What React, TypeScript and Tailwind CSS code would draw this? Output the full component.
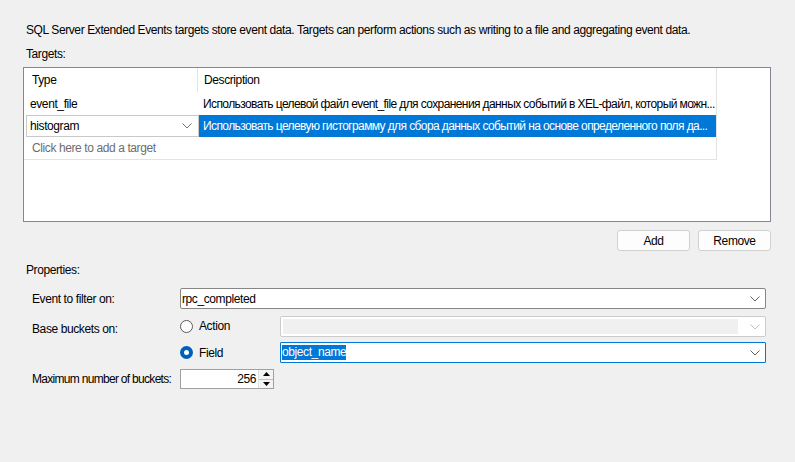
import React from "react";

const Chevron = ({ color = "#5f5f5f" }: { color?: string }) => (
  <svg width="10" height="6" viewBox="0 0 10 6" className="shrink-0">
    <path d="M0.5 0.5 L5 5 L9.5 0.5" fill="none" stroke={color} strokeWidth="1" />
  </svg>
);

export default function App() {
  return (
    <div
      className="w-[795px] h-[462px] bg-[#f0f0f0] text-[12px] tracking-[-0.4px] text-black overflow-hidden flex flex-col whitespace-nowrap"
      style={{ fontFamily: '"Liberation Sans", Arial, sans-serif' }}
    >
      <div className="mt-[22px] ml-[26px] leading-[16px]">
        SQL Server Extended Events targets store event data. Targets can perform actions such as writing to a file and aggregating event data.
      </div>
      <div className="mt-[8px] ml-[26px] leading-[16px]">Targets:</div>

      {/* Grid */}
      <div className="mt-[5px] ml-[23px] w-[748px] h-[155px] border border-[#828790] bg-white">
        <div className="w-[693px] border-r border-b border-[#e3e3e3]">
          <div className="flex h-[24px]">
            <div className="w-[174px] border-r border-[#e5e5e5] pl-[8px] flex items-center">Type</div>
            <div className="flex-1 pl-[6px] flex items-center">Description</div>
          </div>
          <div className="flex h-[23px]">
            <div className="w-[175px] pl-[6px] flex items-center">event_file</div>
            <div className="flex-1 min-w-0 pl-[4px] pr-[1px] flex items-center overflow-hidden tracking-[-0.6px]">
              Использовать целевой файл event_file для сохранения данных событий в XEL-файл, который можн...
            </div>
          </div>
          <div className="flex h-[22px]">
            <div className="w-[175px] pl-[2px] flex">
              <div className="flex-1 border border-[#c9c9c9] flex items-center pl-[3px] pr-[6px] justify-between">
                <span>histogram</span>
                <Chevron color="#707070" />
              </div>
            </div>
            <div className="flex-1 min-w-0 bg-[#0078d7] text-white pl-[4px] pr-[1px] flex items-center overflow-hidden tracking-[-0.6px]">
              Использовать целевую гистограмму для сбора данных событий на основе определенного поля да...
            </div>
          </div>
          <div className="flex h-[22px] items-center pl-[8px] text-[#6d6d6d]">Click here to add a target</div>
        </div>
      </div>

      {/* Buttons */}
      <div className="mt-[8px] flex justify-end gap-[8px] mr-[24px]">
        <button className="w-[73px] h-[21px] rounded-[3px] border border-[#d0d0d0] bg-[#fdfdfd] leading-none">Add</button>
        <button className="w-[73px] h-[21px] rounded-[3px] border border-[#d0d0d0] bg-[#fdfdfd] leading-none">Remove</button>
      </div>

      <div className="mt-[11px] ml-[26px] leading-[16px]">Properties:</div>

      <div className="mt-[10px] pl-[32px] pr-[29px] flex flex-col">
        <div className="flex items-center h-[21px]">
          <div className="w-[148px]">Event to filter on:</div>
          <div className="flex-1 h-full bg-white border border-[#868686] rounded-[2px] flex items-center pl-[1px] pr-[5px] justify-between">
            <span>rpc_completed</span>
            <Chevron />
          </div>
        </div>
        <div className="flex items-center h-[21px] mt-[7px]">
          <div className="w-[148px] pt-[4px]">Base buckets on:</div>
          <div className="w-[100px] flex items-center">
            <div className="w-[13px] h-[13px] rounded-full border border-[#5c5c5c] bg-white" />
            <span className="ml-[6px] -mt-[2px]">Action</span>
          </div>
          <div className="flex-1 h-full bg-white border border-[#cccccc] rounded-[2px] flex items-center p-[2px] pr-[5px]">
            <div className="flex-1 h-full bg-[#f0f0f0]" />
            <div className="w-[22px] flex justify-end">
              <Chevron color="#c0c0c0" />
            </div>
          </div>
        </div>
        <div className="flex items-center h-[21px] mt-[5px]">
          <div className="w-[148px]" />
          <div className="w-[100px] flex items-center">
            <div className="w-[13px] h-[13px] rounded-full bg-[#005fb8] flex items-center justify-center">
              <div className="w-[5px] h-[5px] rounded-full bg-white" />
            </div>
            <span className="ml-[6px]">Field</span>
          </div>
          <div className="flex-1 h-full bg-white border border-[#0078d7] rounded-[1px] flex items-center pl-[1px] pr-[5px] justify-between">
            <span className="bg-[#0078d7] text-white leading-[15px]">object_name</span>
            <Chevron />
          </div>
        </div>
        <div className="flex items-center h-[20px] mt-[6px]">
          <div className="w-[148px] tracking-[-0.7px]">Maximum number of buckets:</div>
          <div className="w-[94px] h-full bg-white border border-[#a0a0a0] flex">
            <div className="flex-1 flex items-center justify-end pr-[2px]">256</div>
            <div className="w-[15px] flex flex-col border-l border-[#e0e0e0]">
              <div className="flex-1 bg-[#f4f4f4] border-b border-[#c0c0c0] flex items-center justify-center">
                <svg width="7" height="4" viewBox="0 0 7 4"><path d="M0 4 L3.5 0 L7 4 Z" fill="#000" /></svg>
              </div>
              <div className="flex-1 bg-[#f4f4f4] flex items-center justify-center">
                <svg width="7" height="4" viewBox="0 0 7 4"><path d="M0 0 L3.5 4 L7 0 Z" fill="#000" /></svg>
              </div>
            </div>
          </div>
        </div>
      </div>
    </div>
  );
}
